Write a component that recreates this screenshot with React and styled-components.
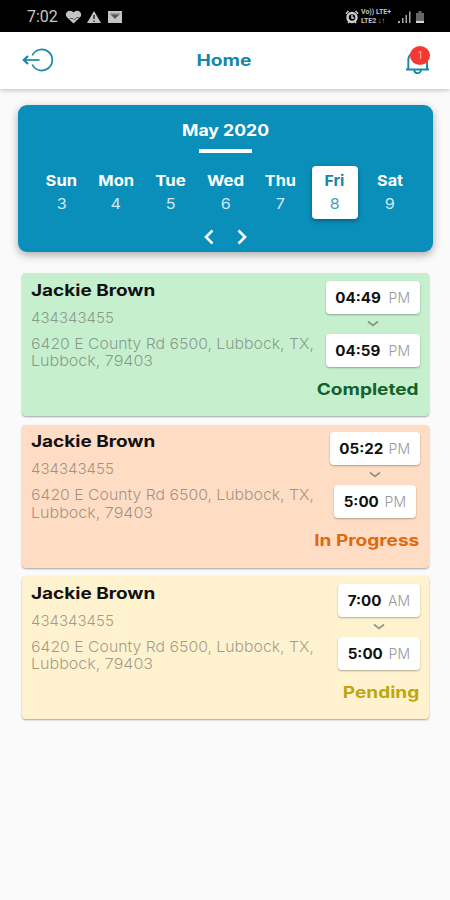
import React from "react";
import styled, { createGlobalStyle } from "styled-components";

const days = [
  { name: "Sun", date: 3, w: 1.1 },
  { name: "Mon", date: 4, w: 1.1 },
  { name: "Tue", date: 5, w: 1.12 },
  { name: "Wed", date: 6, w: 1.12 },
  { name: "Thu", date: 7, w: 1.08 },
  { name: "Fri", date: 8, w: 1.06, active: true },
  { name: "Sat", date: 9, w: 1.08 },
];

const visits = [
  {
    id: 1,
    start: ["04:49", "PM", 94],
    end: ["04:59", "PM", 94],
    status: "Completed",
    background: "#c6efce",
    color: "#126329",
  },
  {
    id: 2,
    start: ["05:22", "PM", 90],
    end: ["5:00", "PM", 82],
    status: "In Progress",
    background: "#ffddc4",
    color: "#e0690f",
  },
  {
    id: 3,
    start: ["7:00", "AM", 82],
    end: ["5:00", "PM", 82],
    status: "Pending",
    background: "#fff2cf",
    color: "#c0a60c",
  },
];

const StatusBar = () => (
  <StyledStatusBar>
    <Clock>7:02</Clock>
    <svg width="58" height="14" viewBox="0 0 58 14" fill="#c4c4c4">
      <path d="M8.5 13.5 1.7 7C-1 3.5 3-1 7 1.3L8.5 2.6 10 1.3c4-2.3 8 2.2 5.3 5.7z" />
      <path d="M5 8.500h3l1.500 1.500 2-2.500h3" fill="none" stroke="#555" />
      <path d="M29 1 36 13H22z" />
      <path d="M29 5v4M29 10.500v1.300" stroke="#222" strokeWidth="1.400" />
      <path d="M43 1h14v12H43z" />
      <path d="m46.500 5 3.500 3.500L53.500 5zM45 4h10" fill="#555" stroke="#555" strokeWidth="0.800" />
    </svg>
    <Spacer />
    <svg width="15" height="14" viewBox="0 0 15 14" fill="none" stroke="#cfcfcf">
      <circle cx="7" cy="7.5" r="4.5" strokeWidth="2.4" />
      <path d="M7 5v3h2.200M1 3.800 3.500 1M13 3.800 10.500 1M3 13l1.500-2M11 13l-1.500-2" strokeWidth="1.500" />
    </svg>
    <Network>
      <span>Vo)) LTE+</span>
      <span>LTE2 ↓↑</span>
    </Network>
    <svg width="28" height="14" viewBox="0 0 28 14" fill="#a8a8a8">
      <path d="M0 11h2v2H0zM4 8h1.500v5H4zM7.500 5H9v8H7.500zM11 1.500h1.500V13H11z" />
      <path d="M18 3h2.500V1h3v2H26v7h-8z" fill="#666" />
      <path d="M18 10.500h8V13h-8z" fill="#d5d5d5" />
    </svg>
  </StyledStatusBar>
);

const Header = () => (
  <StyledHeader>
    <IconButton>
      <svg width="32" height="24" viewBox="0 0 32 24" fill="none" stroke="#1687a6" strokeWidth="1.700">
        <path d="M10.300 7.500a10.500 10.500 0 1 1 0 9" />
        <path d="M17.500 12H2" />
        <path d="M6 8 1.800 12 6 16" strokeWidth="2.200" />
      </svg>
    </IconButton>
    <Title>
      <Wide $x={1.2}>Home</Wide>
    </Title>
    <IconButton>
      <svg width="25" height="28" viewBox="0 0 25 28" fill="none" stroke="#1687a6" strokeWidth="1.900">
        <path d="M1 23.500h23M3.300 23V14C3.300 3.500 22 3.500 22 14v9M9.300 24c0 4.200 6.600 4.200 6.600 0" />
      </svg>
      <Badge>1</Badge>
    </IconButton>
  </StyledHeader>
);

const Calendar = () => (
  <StyledCalendar>
    <Month>
      <Wide $x={1.1}>May 2020</Wide>
    </Month>
    <Underline />
    <Week>
      {days.map((day) => (
        <Day key={day.name} $active={day.active}>
          <DayName>
            <Wide $x={day.w}>{day.name}</Wide>
          </DayName>
          <DayDate>
            <Wide $x={1.08}>{day.date}</Wide>
          </DayDate>
        </Day>
      ))}
    </Week>
    <Arrows>
      <svg width="12" height="16" viewBox="0 0 12 16" fill="none" stroke="#fff" strokeWidth="2.600">
        <path d="M9.500 1.500 3 8l6.500 6.500" />
      </svg>
      <svg width="12" height="16" viewBox="0 0 12 16" fill="none" stroke="#fff" strokeWidth="2.600">
        <path d="M2.500 1.500 9 8l-6.500 6.500" />
      </svg>
    </Arrows>
  </StyledCalendar>
);

const Time = ({ value }) => {
  const [hour, period, width] = value;
  return (
    <TimeBox $width={width}>
      <Hour>
        <Wide $x={1.08}>{hour}</Wide>
      </Hour>
      <Period>{period}</Period>
    </TimeBox>
  );
};

const VisitCard = ({ visit }) => (
  <StyledCard $background={visit.background}>
    <Info>
      <Name>
        <Wide $x={1.185} $origin="left">Jackie Brown</Wide>
      </Name>
      <Phone>
        <Wide $x={1} $origin="left">434343455</Wide>
      </Phone>
      <Address>
        <Wide $x={1.052} $origin="left">6420 E County Rd 6500, Lubbock, TX,</Wide>
        <Wide $x={1.07} $origin="left">Lubbock, 79403</Wide>
      </Address>
    </Info>
    <Side>
      <Times>
        <Time value={visit.start} />
        <svg width="12" height="8" viewBox="0 0 12 8" fill="none" stroke="#4f5a52" strokeOpacity=".6" strokeWidth="1.700">
          <path d="m1 1.500 5 4 5-4" />
        </svg>
        <Time value={visit.end} />
      </Times>
      <Status $color={visit.color}>
        <Wide $x={1.19} $origin="right">{visit.status}</Wide>
      </Status>
    </Side>
  </StyledCard>
);

const App = () => (
  <>
    <GlobalStyle />
    <Screen>
      <StatusBar />
      <Header />
      <Calendar />
      <List>
        {visits.map((visit) => (
          <VisitCard key={visit.id} visit={visit} />
        ))}
      </List>
    </Screen>
  </>
);

const GlobalStyle = createGlobalStyle`
  * {
    box-sizing: border-box;
  }
  body {
    margin: 0;
    font-family: "Inter", sans-serif;
  }
  svg {
    display: block;
    flex-shrink: 0;
  }
`;
const Screen = styled.div`
  width: 450px;
  height: 900px;
  background: #fafafa;
  overflow: hidden;
`;
const Wide = styled.span`
  display: inline-block;
  white-space: nowrap;
  transform: scaleX(${({ $x }) => $x});
  transform-origin: ${({ $origin }) => $origin || "center"};
`;
const StyledStatusBar = styled.div`
  display: flex;
  align-items: center;
  height: 32px;
  padding: 1px 24px 0 27px;
  background: #000;
`;
const Clock = styled.span`
  width: 38px;
  font-family: "Roboto", sans-serif;
  font-size: 16px;
  color: #c8c8c8;
`;
const Spacer = styled.div`
  flex: 1;
`;
const Network = styled.div`
  display: flex;
  flex-direction: column;
  width: 38px;
  padding-left: 1px;
  font-family: "Roboto", sans-serif;
  font-size: 7px;
  font-weight: 700;
  line-height: 9px;
  white-space: nowrap;
  color: #c4c4c4;
`;
const StyledHeader = styled.header`
  display: flex;
  align-items: center;
  justify-content: space-between;
  height: 57px;
  padding: 0 20px 1px 22px;
  background: #fff;
  box-shadow: 0 1px 5px rgba(0, 0, 0, 0.25);
`;
const IconButton = styled.div`
  position: relative;
`;
const Title = styled.h1`
  margin: 0;
  padding-right: 12px;
  font-size: 16px;
  font-weight: 700;
  color: #1687a6;
`;
const Badge = styled.span`
  position: absolute;
  top: 0;
  right: 0;
  width: 20px;
  height: 19px;
  border-radius: 50%;
  background: #f23a33;
  color: #ffb0a8;
  font-size: 10px;
  line-height: 19px;
  text-align: center;
`;
const StyledCalendar = styled.section`
  display: flex;
  flex-direction: column;
  align-items: center;
  width: 415px;
  height: 147px;
  margin: 16px 0 0 18px;
  padding-top: 15px;
  background: #0a8fbb;
  border-radius: 9px;
  box-shadow: 0 3px 8px rgba(0, 0, 0, 0.32);
`;
const Month = styled.div`
  font-size: 16px;
  font-weight: 700;
  line-height: 20px;
  color: #fff;
`;
const Underline = styled.div`
  width: 53px;
  height: 4px;
  margin-top: 9px;
  background: #fff;
`;
const Week = styled.div`
  display: grid;
  grid-template-columns: repeat(7, 46px);
  column-gap: 8.7px;
  margin-top: 13px;
`;
const Day = styled.div`
  height: 53px;
  padding-top: 5px;
  border-radius: 4px;
  text-align: center;
  color: ${({ $active }) => ($active ? "#1687a6" : "#fff")};
  background: ${({ $active }) => ($active ? "#fff" : "transparent")};
  box-shadow: ${({ $active }) => ($active ? "0 2px 5px rgba(0, 0, 0, 0.35)" : "none")};
`;
const DayName = styled.div`
  font-size: 15px;
  font-weight: 700;
  line-height: 20px;
`;
const DayDate = styled.div`
  margin-top: 3px;
  font-size: 15px;
  line-height: 20px;
  opacity: 0.8;
`;
const Arrows = styled.div`
  display: flex;
  gap: 21px;
  margin-top: 10px;
`;
const List = styled.main`
  display: flex;
  flex-direction: column;
  gap: 8.5px;
  padding: 21px 21px 0 22px;
`;
const StyledCard = styled.article`
  display: flex;
  justify-content: space-between;
  height: 143px;
  padding: 7.5px 9px 0;
  border-radius: 4px;
  background: ${({ $background }) => $background};
  box-shadow: 0 1px 2px rgba(0, 0, 0, 0.35);
`;
const Info = styled.div`
  width: 285px;
`;
const Name = styled.div`
  font-size: 16px;
  font-weight: 700;
  line-height: 19px;
  color: #111;
`;
const Phone = styled.div`
  margin-top: 9px;
  font-size: 15px;
  font-weight: 300;
  line-height: 18px;
  color: rgba(80, 80, 80, 0.55);
`;
const Address = styled.div`
  display: flex;
  flex-direction: column;
  align-items: flex-start;
  margin-top: 8px;
  font-size: 15px;
  font-weight: 300;
  line-height: 17.5px;
  color: rgba(80, 80, 80, 0.55);
`;
const Side = styled.div`
  display: flex;
  flex-direction: column;
  align-items: flex-end;
`;
const Times = styled.div`
  display: flex;
  flex-direction: column;
  align-items: center;
  gap: 6px;
`;
const TimeBox = styled.div`
  display: flex;
  align-items: center;
  justify-content: space-between;
  width: ${({ $width }) => $width}px;
  height: 33px;
  padding: 0 10px 0 11px;
  border-radius: 4px;
  background: #fff;
  box-shadow: 0 1px 2px rgba(0, 0, 0, 0.3);
`;
const Hour = styled.span`
  font-size: 14px;
  font-weight: 700;
  color: #111;
`;
const Period = styled.span`
  font-size: 14px;
  font-weight: 300;
  color: #999;
`;
const Status = styled.div`
  margin-top: 12px;
  padding-right: 1px;
  font-size: 16px;
  font-weight: 700;
  line-height: 20px;
  color: ${({ $color }) => $color};
`;

export default App;
